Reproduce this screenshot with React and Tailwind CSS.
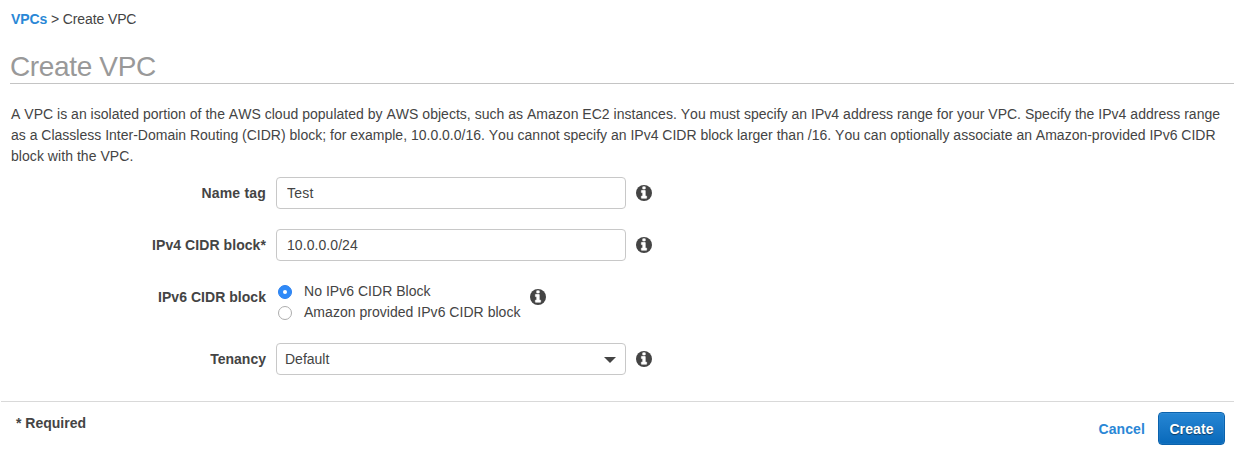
import { useState } from "react";

function Info() {
  return (
    <svg viewBox="128 128 1536 1536" className="ml-[10px] h-4 w-4 shrink-0">
      <circle cx="896" cy="896" r="768" className="fill-[#444]" />
      <path
        className="fill-white stroke-white stroke-[50px]"
        d="M1152 1376v-160q0-14-9-23t-23-9h-96v-512q0-14-9-23t-23-9h-320q-14 0-23 9t-9 23v160q0 14 9 23t23 9h96v320h-96q-14 0-23 9t-9 23v160q0 14 9 23t23 9h448q14 0 23-9t9-23zM1024 480v-160q0-14-9-23t-23-9h-192q-14 0-23 9t-9 23v160q0 14 9 23t23 9h192q14 0 23-9t9-23z"
      />
    </svg>
  );
}

function Field({ label, className, children }) {
  return (
    <div className={`flex items-center ${className}`}>
      <div className="w-[266px] shrink-0 text-right font-bold whitespace-nowrap">{label}</div>
      <div className="ml-[10px] flex items-center">{children}</div>
    </div>
  );
}

function TextInput({ label, value }) {
  return (
    <input
      aria-label={label}
      defaultValue={value}
      className="h-8 w-[350px] rounded-[4px] border border-[#c8c8c8] bg-white px-[10px] text-[14px] outline-none"
    />
  );
}

function Radio({ label, checked, onSelect }) {
  return (
    <label className="flex h-[21px] items-center">
      <input type="radio" name="ipv6" className="sr-only" checked={checked} onChange={onSelect} />
      <span
        className={`ml-[2px] flex h-[14px] w-[14px] items-center justify-center rounded-full border ${
          checked ? "border-[#2a80f0] bg-[#2f8af8]" : "border-[#adadad] bg-white"
        }`}
      >
        {checked && <span className="h-1 w-1 rounded-full bg-white" />}
      </span>
      <span className="ml-3 tracking-[0.03px] whitespace-nowrap">{label}</span>
    </label>
  );
}

export default function App() {
  const [ipv6, setIpv6] = useState("none");
  return (
    <div className="h-[459px] w-[1253px] overflow-hidden bg-white pt-[9px] font-['Liberation_Sans',Arial,sans-serif] text-[14px] leading-[21px] text-[#444]">
      <nav className="ml-[11px] h-[21px] tracking-[-0.11px] whitespace-nowrap">
        <a className="font-bold text-[#2a87d6]">VPCs</a> &gt; Create VPC
      </nav>
      <h1 className="mt-[18px] ml-[10px] h-9 w-[1224px] border-b border-[#c4c4c4] text-[28px] leading-[38px] tracking-[-0.35px] text-[#999]">
        Create VPC
      </h1>
      <p className="mt-5 ml-[11px] whitespace-nowrap [font-kerning:none]">
        <span className="block tracking-[0.02px]">
          A VPC is an isolated portion of the AWS cloud populated by AWS objects, such as Amazon EC2 instances. You must specify an IPv4 address range for your VPC. Specify the IPv4 address range
        </span>
        <span className="block">
          as a Classless Inter-Domain Routing (CIDR) block; for example, 10.0.0.0/16. You cannot specify an IPv4 CIDR block larger than /16. You can optionally associate an Amazon-provided IPv6 CIDR
        </span>
        <span className="block tracking-[0.05px]">block with the VPC.</span>
      </p>
      <form className="mt-[10px]">
        <Field label="Name tag" className="h-8 tracking-[0.2px]">
          <TextInput label="Name tag" value="Test" />
          <Info />
        </Field>
        <Field label="IPv4 CIDR block*" className="mt-5 h-8 tracking-[0.07px]">
          <TextInput label="IPv4 CIDR block" value="10.0.0.0/24" />
          <Info />
        </Field>
        <div className="mt-5 flex h-[42px]">
          <div className="mt-[6px] w-[266px] shrink-0 text-right font-bold tracking-[0.04px]">IPv6 CIDR block</div>
          <div className="ml-[10px]">
            <Radio label="No IPv6 CIDR Block" checked={ipv6 === "none"} onSelect={() => setIpv6("none")} />
            <Radio label="Amazon provided IPv6 CIDR block" checked={ipv6 === "amazon"} onSelect={() => setIpv6("amazon")} />
          </div>
          <div className="mt-2">
            <Info />
          </div>
        </div>
        <Field label="Tenancy" className="mt-5 h-8">
          <div className="flex h-8 w-[350px] items-center justify-between rounded-[4px] border border-[#c8c8c8] pr-[9px] pl-2">
            <span>Default</span>
            <svg viewBox="0 0 12 6" className="mt-[2px] h-[6px] w-3 fill-[#444]">
              <path d="M0 0h12L6 6z" />
            </svg>
          </div>
          <Info />
        </Field>
      </form>
      <footer className="mt-[26px] ml-px flex w-[1233px] items-start justify-between border-t border-[#d9d9d9] pt-[10px] pr-[9px] pl-[15px] font-bold">
        <span className="mt-px">* Required</span>
        <div className="flex items-center">
          <button type="button" className="mt-[2px] mr-[13px] tracking-[0.1px] text-[#2a87d6]">Cancel</button>
          <button
            type="button"
            className="h-[33px] w-[67px] rounded-[4px] border border-[#0a62ad] bg-linear-to-b from-[#2586d4] to-[#0769ba] pt-px tracking-[0.1px] text-white shadow-[inset_0_0_1px_rgba(255,255,255,0.5)] [text-shadow:0_1px_1px_rgba(0,0,0,0.5)]"
          >
            Create
          </button>
        </div>
      </footer>
    </div>
  );
}
